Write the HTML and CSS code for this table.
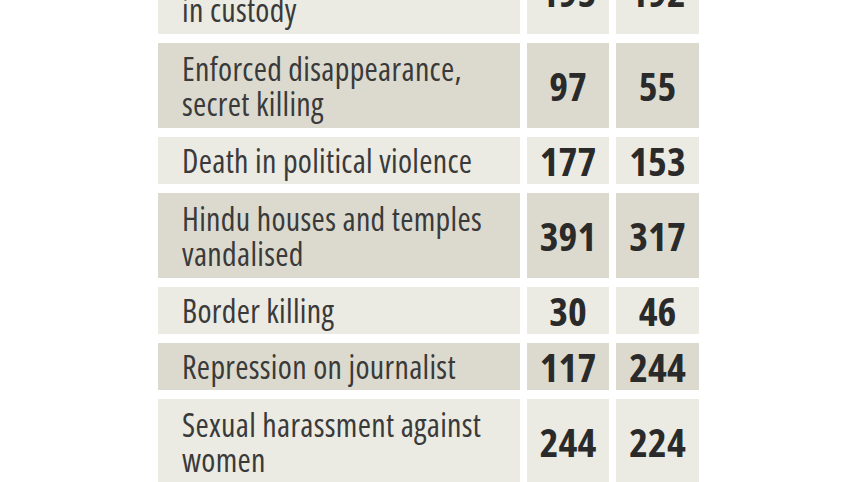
FILE: index.html
```html
<!DOCTYPE html>
<html><head><link rel="stylesheet" href="styles.css"></head>
<body>
<div class="table">
  <div class="row tall light"><div class="label">Extrajudicial killing, death<br>in custody</div><div class="num">195</div><div class="num">192</div></div>
  <div class="row tall dark"><div class="label">Enforced disappearance,<br>secret killing</div><div class="num">97</div><div class="num">55</div></div>
  <div class="row light"><div class="label">Death in political violence</div><div class="num">177</div><div class="num">153</div></div>
  <div class="row tall dark"><div class="label">Hindu houses and temples<br>vandalised</div><div class="num">391</div><div class="num">317</div></div>
  <div class="row light"><div class="label">Border killing</div><div class="num">30</div><div class="num">46</div></div>
  <div class="row dark"><div class="label">Repression on journalist</div><div class="num">117</div><div class="num">244</div></div>
  <div class="row tall light"><div class="label">Sexual harassment against<br>women</div><div class="num">244</div><div class="num">224</div></div>
</div>
</body></html>
```
FILE: styles.css
```css
html,body{margin:0;padding:0;background:#fff;}
body{width:857px;height:482px;overflow:hidden;}
.table{
  width:541px;
  margin:-51px auto 0;
  display:flex;
  flex-direction:column;
  gap:9px;
  font-family:"Open Sans",sans-serif;
  font-stretch:75%;
}
.row{
  display:grid;
  grid-template-columns:362px 82px 83px;
  column-gap:7px;
  height:47px;
}
.row.tall{height:85px;}
.label,.num{display:flex;align-items:center;}
.light .label,.light .num{background:#ebeae3;}
.dark .label,.dark .num{background:#dcdacf;}
.label{
  padding-left:24px;
  font-size:32px;
  line-height:35px;
  letter-spacing:.3px;
  color:#3a3a3a;
}
.num{
  justify-content:center;
  font-size:40px;
  line-height:1;
  font-weight:700;
  color:#2a2a2a;
}
```
